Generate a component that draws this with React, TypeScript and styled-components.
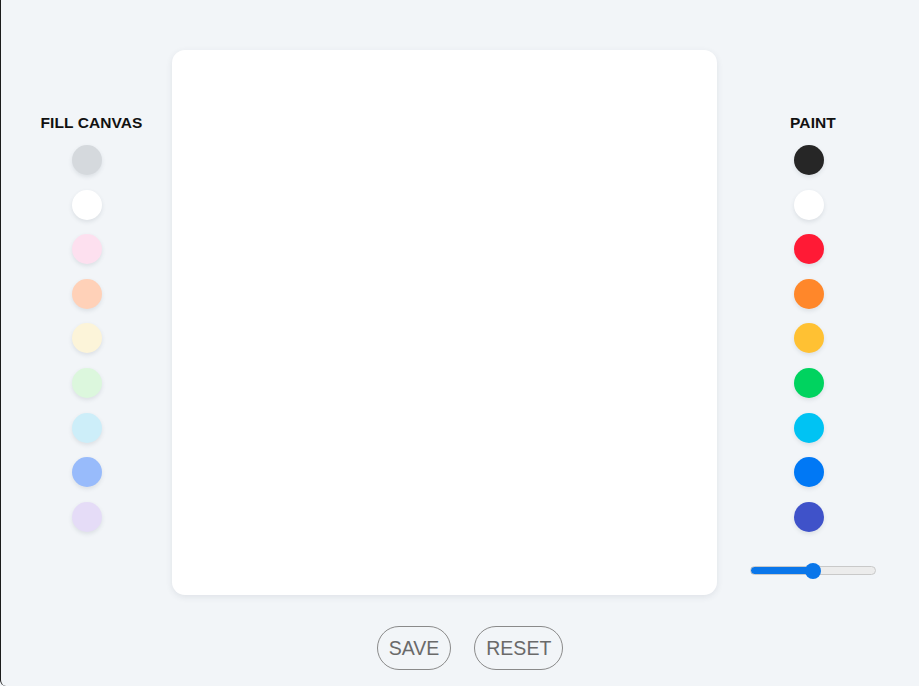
import React, { useState } from "react";
import styled, { createGlobalStyle } from "styled-components";

const GlobalStyle = createGlobalStyle`
  html, body {
    margin: 0;
    padding: 0;
    background: #f2f5f8;
  }
  body {
    font-family: "Liberation Sans", Arial, sans-serif;
  }
`;

const Page = styled.div`
  width: 919px;
  height: 686px;
  box-sizing: border-box;
  background: #f2f5f8;
  border-left: 1px solid #1c1c1c;
  border-bottom-left-radius: 6px;
  display: flex;
  flex-direction: column;
  align-items: flex-start;
  padding-top: 50px;
  overflow: hidden;
`;

const Row = styled.div`
  display: flex;
  align-items: flex-start;
`;

const Palette = styled.div<{ $width: number; $offset: number; $inset: number }>`
  width: ${(p) => p.$width}px;
  margin-left: ${(p) => p.$offset}px;
  padding: 64px 0 0 ${(p) => p.$inset}px;
  box-sizing: border-box;
  display: flex;
  flex-direction: column;
  align-items: center;
`;

const Label = styled.div`
  font-size: 15.5px;
  font-weight: 700;
  color: #111;
  line-height: 17px;
  margin-bottom: 14px;
  letter-spacing: 0.1px;
`;

const Swatches = styled.div`
  display: flex;
  flex-direction: column;
  gap: 14.6px;
  margin-right: 9px;
`;

const Swatch = styled.button<{ $color: string }>`
  width: 30px;
  height: 30px;
  padding: 0;
  border: none;
  border-radius: 50%;
  background: ${(p) => p.$color};
  box-shadow: 0 2px 4px rgba(60, 70, 90, 0.12);
  cursor: pointer;
`;

const Canvas = styled.div`
  width: 545px;
  height: 545px;
  background: #ffffff;
  border-radius: 13px;
  box-shadow: 0 2px 6px rgba(60, 70, 90, 0.1);
`;

const Slider = styled.input`
  -webkit-appearance: none;
  appearance: none;
  width: 126px;
  height: 16px;
  margin: 31px 0 0;
  background: transparent;
  &::-webkit-slider-runnable-track {
    height: 9px;
    border-radius: 5px;
    border: 1px solid #c9c9c9;
    background: linear-gradient(
      to right,
      #0a76ea 0%,
      #0a76ea ${(p) => p.value}%,
      #ececec ${(p) => p.value}%,
      #ececec 100%
    );
  }
  &::-webkit-slider-thumb {
    -webkit-appearance: none;
    width: 16px;
    height: 16px;
    margin-top: -4.5px;
    border-radius: 50%;
    background: #0a76ea;
    border: none;
  }
`;

const Actions = styled.div`
  width: 100%;
  display: flex;
  justify-content: center;
  gap: 23px;
  margin-top: 31px;
  padding-left: 20px;
  box-sizing: border-box;
`;

const Button = styled.button`
  height: 44px;
  padding: 0 11px;
  border: 1px solid #8a8a8a;
  border-radius: 22px;
  background: transparent;
  color: #6a6a6a;
  font-family: "Liberation Sans", Arial, sans-serif;
  font-size: 19.5px;
  line-height: 42px;
  cursor: pointer;
`;

const fills = [
  "#d5d9dd",
  "#ffffff",
  "#fde0ef",
  "#ffd1b8",
  "#fcf4d9",
  "#dcf7dd",
  "#cdeef9",
  "#98bbfb",
  "#e5dcf7",
];

const paints = [
  "#262626",
  "#ffffff",
  "#ff1a35",
  "#ff872a",
  "#ffc133",
  "#00d35f",
  "#00c3f3",
  "#0078f5",
  "#3f52c9",
];

export default function App() {
  const [size, setSize] = useState(50);
  return (
    <>
      <GlobalStyle />
      <Page>
        <Row>
          <Palette $width={171} $offset={0} $inset={10}>
            <Label>FILL CANVAS</Label>
            <Swatches>
              {fills.map((c) => (
                <Swatch key={c} $color={c} />
              ))}
            </Swatches>
          </Palette>
          <Canvas />
          <Palette $width={126} $offset={33} $inset={0}>
            <Label>PAINT</Label>
            <Swatches>
              {paints.map((c) => (
                <Swatch key={c} $color={c} />
              ))}
            </Swatches>
            <Slider
              type="range"
              min={0}
              max={100}
              value={size}
              onChange={(e) => setSize(Number(e.target.value))}
            />
          </Palette>
        </Row>
        <Actions>
          <Button>SAVE</Button>
          <Button>RESET</Button>
        </Actions>
      </Page>
    </>
  );
}
